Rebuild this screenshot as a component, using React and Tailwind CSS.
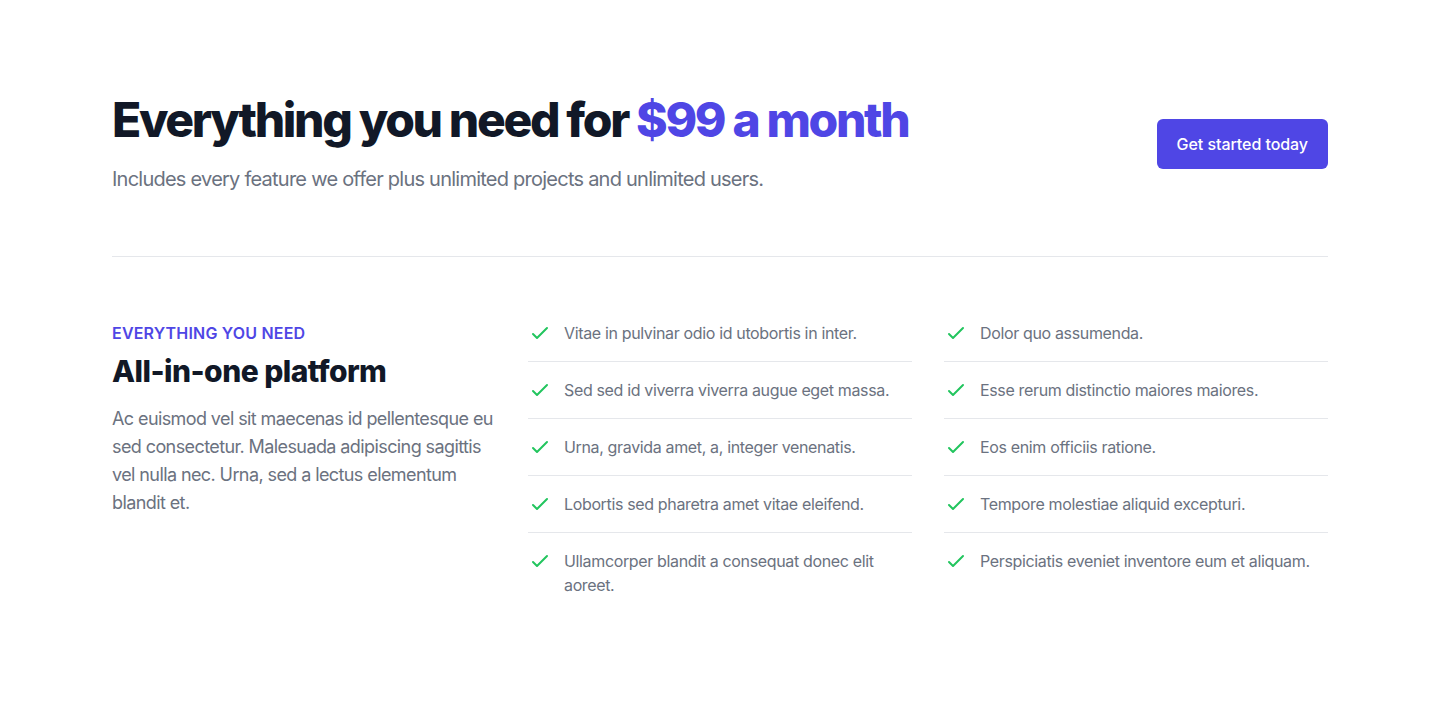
const left = [
  "Vitae in pulvinar odio id utobortis in inter.",
  "Sed sed id viverra viverra augue eget massa.",
  "Urna, gravida amet, a, integer venenatis.",
  "Lobortis sed pharetra amet vitae eleifend.",
  "Ullamcorper blandit a consequat donec elit aoreet.",
];

const right = [
  "Dolor quo assumenda.",
  "Esse rerum distinctio maiores maiores.",
  "Eos enim officiis ratione.",
  "Tempore molestiae aliquid excepturi.",
  "Perspiciatis eveniet inventore eum et aliquam.",
];

function Check() {
  return (
    <svg
      className="h-6 w-6 flex-shrink-0 text-[#22c55e]"
      fill="none"
      viewBox="0 0 24 24"
      stroke="currentColor"
      strokeWidth={2}
    >
      <path strokeLinecap="round" strokeLinejoin="round" d="M5 13l4 4L19 7" />
    </svg>
  );
}

function FeatureList({ items }) {
  return (
    <ul className="divide-y divide-[#e5e7eb]">
      {items.map((item, i) => (
        <li key={i} className={i === 0 ? "flex pb-4" : "flex py-4"}>
          <Check />
          <span className="ml-3 text-base leading-6 tracking-[-0.022em] text-[#6b7280]">
            {item}
          </span>
        </li>
      ))}
    </ul>
  );
}

export default function App() {
  return (
    <div
      className="min-h-screen bg-white"
      style={{ fontFamily: "Inter, 'Noto Sans', sans-serif" }}
    >
      <div className="mx-auto max-w-[1280px] px-8 py-24">
        {/* Header */}

        <div className="flex items-center justify-between pb-[63px]">
          <div>
            <h2 className="text-[48px] font-extrabold leading-none tracking-[-0.049em] text-[#111827]">
              Everything you need for{" "}
              <span className="text-[#4f46e5]">$99 a month</span>
            </h2>

            <p className="mt-[21px] text-xl leading-7 tracking-[-0.038em] text-[#6b7280]">
              Includes every feature we offer plus unlimited projects and unlimited users.
            </p>
          </div>

          <a
            href="#"
            className="-mt-[2px] rounded-md bg-[#4f46e5] px-5 py-[13px] text-base font-medium leading-6 tracking-[-0.004em] text-white"
          >
            Get started today
          </a>
        </div>

        {/* Features */}

        <div className="grid grid-cols-3 gap-x-8 border-t border-[#e5e7eb] pt-16">
          <div>
            <h3 className="text-base font-semibold uppercase leading-6 tracking-[0.012em] text-[#4f46e5]">
              Everything you need
            </h3>

            <p className="mt-2 text-3xl font-extrabold leading-9 tracking-[-0.018em] text-[#111827]">
              All-in-one platform
            </p>

            <p className="mt-4 text-lg leading-7 tracking-[-0.033em] text-[#6b7280]">
              Ac euismod vel sit maecenas id pellentesque eu sed consectetur. Malesuada
              adipiscing sagittis vel nulla nec. Urna, sed a lectus elementum blandit et.
            </p>
          </div>

          <FeatureList items={left} />

          <FeatureList items={right} />
        </div>
      </div>
    </div>
  );
}
